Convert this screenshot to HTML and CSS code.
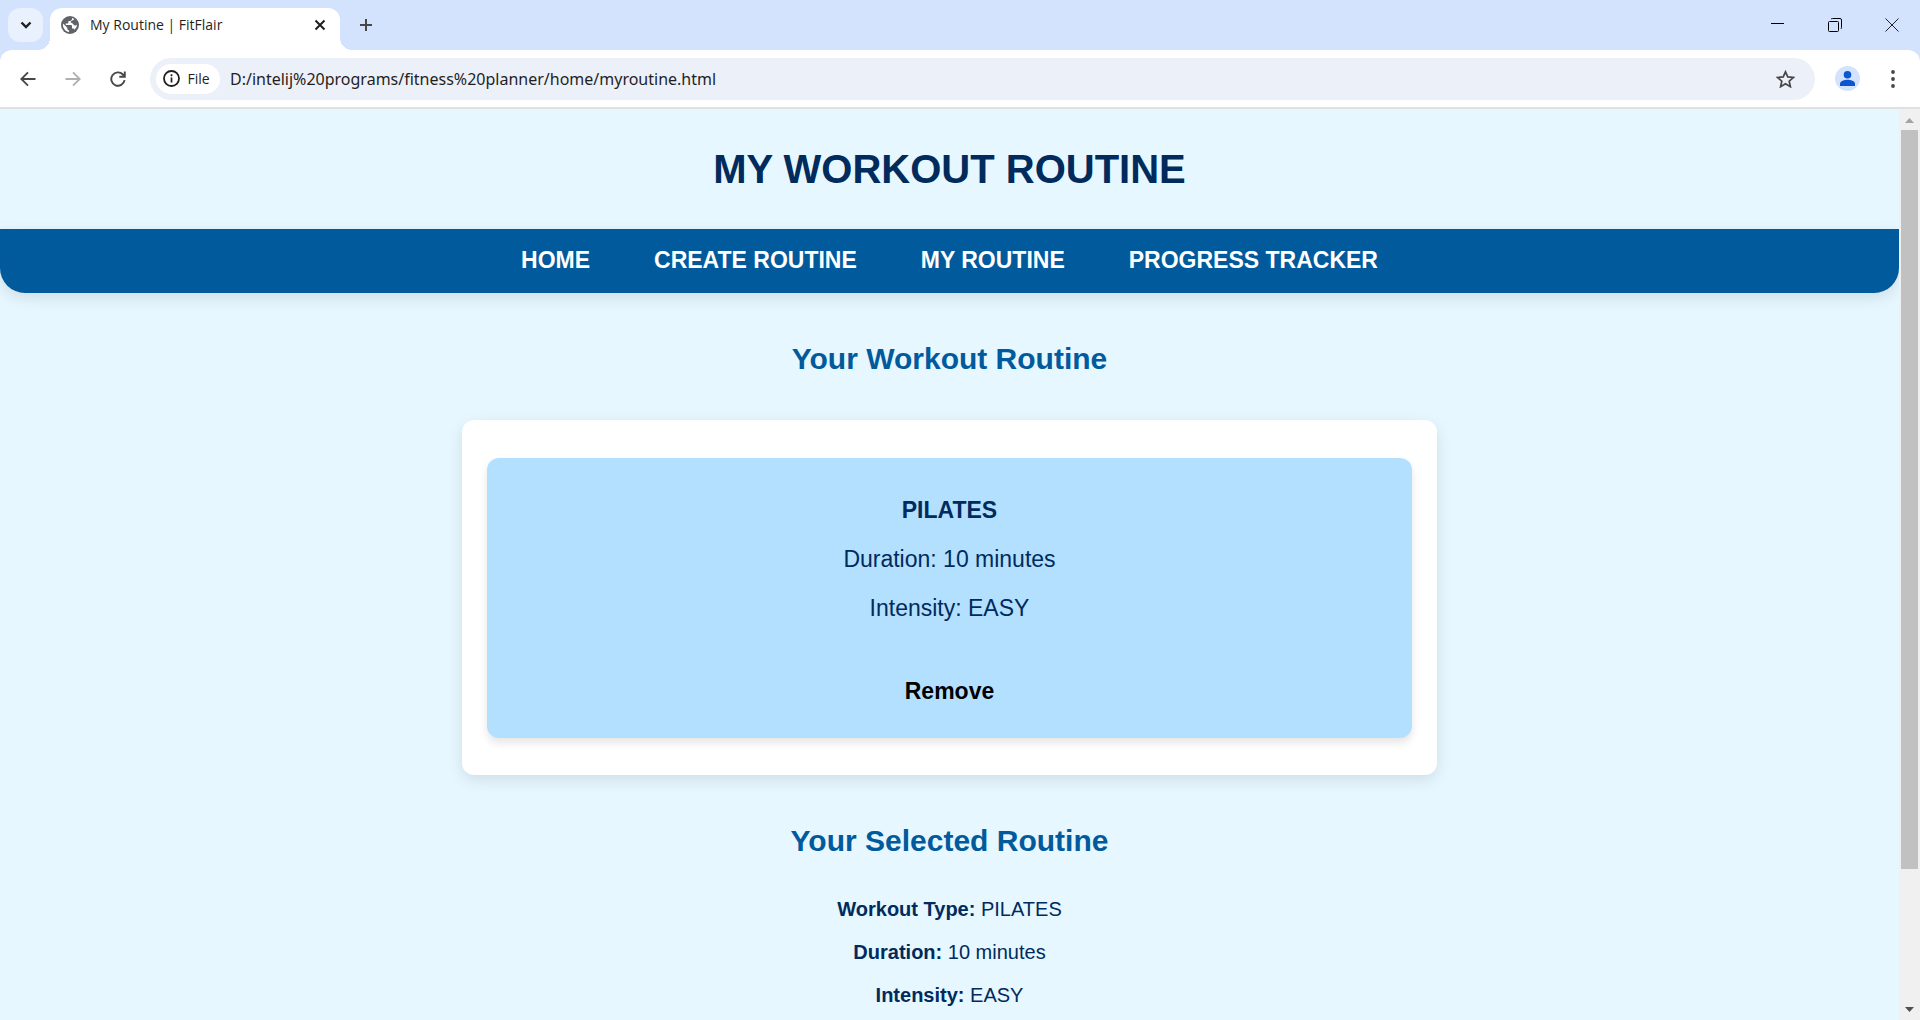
FILE: index.html
```html
<!DOCTYPE html>
<html lang="en">
<head>
<meta charset="utf-8">
<title>My Routine | FitFlair</title>
<link rel="stylesheet" href="styles.css">
</head>
<body>
<div class="browser">
  <div class="tab-strip">
    <button class="tab-search" aria-label="Search tabs">
      <svg width="12" height="8" viewBox="0 0 12 8"><path d="M1.5 1.5 6 6l4.500-4.500" fill="none" stroke="#1f1f1f" stroke-width="2.400"/></svg>
    </button>
    <div class="tab">
      <svg class="tab-icon" width="18" height="18" viewBox="0 0 18 18"><circle cx="9" cy="9" r="9" fill="#5f6368"/><path d="M11 2.100v1c0 1-.8 1.800-1.800 1.800H7.400v1.800c0 .5-.4.900-.9.900H4.700v1.500h5.400c.5 0 .9.400.9.900V12.600h.9c.8 0 1.500.5 1.700 1.200A7.200 7.200 0 0 0 16.100 8.500C15.500 9.200 14.600 9.600 13.600 9.400 12 9 12.300 7.300 10.900 7.100 9.600 7 9.200 5.900 10.200 5.300L13.400 3.300C12.700 2.800 11.900 2.400 11 2.100zM2 7.500C1.300 11.500 4 15.600 8.100 16.100V14.400c-1 0-1.800-.8-1.800-1.800V11.700z" fill="#fff"/></svg>
      <span class="tab-title">My Routine | FitFlair</span>
      <button class="tab-close" aria-label="Close tab">
        <svg width="12" height="12" viewBox="0 0 12 12"><path d="M1.500 1.500l9 9M10.500 1.500l-9 9" stroke="#1f1f1f" stroke-width="2"/></svg>
      </button>
    </div>
    <button class="new-tab" aria-label="New tab">
      <svg width="14" height="14" viewBox="0 0 14 14"><path d="M7 1v12M1 7h12" stroke="#474747" stroke-width="2"/></svg>
    </button>
    <div class="window-controls">
      <button aria-label="Minimize"><svg width="13" height="13" viewBox="0 0 13 13"><path d="M0 5.500h13" stroke="#000"/></svg></button>
      <button aria-label="Restore"><svg width="14" height="14" viewBox="0 0 14 14"><path d="M1.500 3.500h8a1 1 0 0 1 1 1v8a1 1 0 0 1-1 1h-8a1 1 0 0 1-1-1v-8a1 1 0 0 1 1-1zM3 1.200C3.300.7 4 .5 4.500.5H12A1.500 1.500 0 0 1 13.500 2v7.500c0 .5-.2 1.200-.7 1.500" fill="none" stroke="#000"/></svg></button>
      <button aria-label="Close window"><svg width="14" height="14" viewBox="0 0 14 14"><path d="M.5.5l13 13M13.500.5l-13 13" stroke="#222"/></svg></button>
    </div>
  </div>

  <div class="toolbar">
    <button class="tool" aria-label="Back"><svg width="16" height="16" viewBox="0 0 16 16"><path d="M15.500 8H2M8 1.300 1.300 8 8 14.700" fill="none" stroke="#474747" stroke-width="1.900"/></svg></button>
    <button class="tool" aria-label="Forward" disabled><svg width="16" height="16" viewBox="0 0 16 16"><path d="M.5 8H14M8 1.300 14.700 8 8 14.700" fill="none" stroke="#b0b0b0" stroke-width="1.900"/></svg></button>
    <button class="tool" aria-label="Reload"><svg width="16" height="16" viewBox="0 0 16 16"><path d="M14.600 9.200A6.700 6.700 0 1 1 12.900 3.500L14.500 5.200M14.800.5V5.700H9.300" fill="none" stroke="#474747" stroke-width="1.900"/></svg></button>
    <div class="address">
      <button class="file-chip">
        <svg width="17" height="17" viewBox="0 0 17 17"><circle cx="8.500" cy="8.500" r="7.500" fill="none" stroke="#1f1f1f" stroke-width="1.800"/><path d="M8.500 7.500v5M8.500 4.300v1.900" stroke="#1f1f1f" stroke-width="1.700"/></svg>
        File
      </button>
      <input class="url" type="text" aria-label="Address" value="D:/intelij%20programs/fitness%20planner/home/myroutine.html">
      <button class="star" aria-label="Bookmark this page"><svg width="19" height="18" viewBox="0 0 19 18"><path d="M9.500 1.800l2.300 5.100 5.600.6-4.200 3.700 1.200 5.500-4.900-2.900-4.900 2.900 1.200-5.500L1.600 7.500l5.600-.6z" fill="none" stroke="#474747" stroke-width="1.700"/></svg></button>
    </div>
    <button class="tool" aria-label="Profile"><svg width="25" height="25" viewBox="0 0 25 25"><circle cx="12.500" cy="12.500" r="12.500" fill="#d3e3fd"/><circle cx="12.500" cy="8.800" r="3.800" fill="#0b57d0"/><path d="M5 20v-2.200c0-2.800 4.500-4 7.500-4s7.500 1.200 7.500 4V20z" fill="#0b57d0"/></svg></button>
    <button class="tool" aria-label="Menu"><svg width="4" height="18" viewBox="0 0 4 18"><g fill="#474747"><circle cx="2" cy="2" r="1.900"/><circle cx="2" cy="9" r="1.900"/><circle cx="2" cy="16" r="1.900"/></g></svg></button>
  </div>

  <div class="viewport">
    <div class="page">
      <h1>MY WORKOUT ROUTINE</h1>
      <nav class="menu">
        <a href="#">HOME</a>
        <a href="#">CREATE ROUTINE</a>
        <a href="#">MY ROUTINE</a>
        <a href="#">PROGRESS TRACKER</a>
      </nav>
      <main>
        <h2>Your Workout Routine</h2>
        <section class="routine-list">
          <article class="routine">
            <h3>PILATES</h3>
            <p>Duration: 10 minutes</p>
            <p>Intensity: EASY</p>
            <button class="remove">Remove</button>
          </article>
        </section>
        <h2>Your Selected Routine</h2>
        <section class="selected">
          <p><strong>Workout Type:</strong> PILATES</p>
          <p><strong>Duration:</strong> 10 minutes</p>
          <p><strong>Intensity:</strong> EASY</p>
        </section>
      </main>
    </div>
    <div class="scrollbar">
      <svg width="21" height="21" viewBox="0 0 21 21"><path d="M6 14l4.500-5 4.500 5z" fill="#a3a3a3"/></svg>
      <div class="scroll-track"><div class="scroll-thumb"></div></div>
      <svg width="21" height="21" viewBox="0 0 21 21"><path d="M6 8l4.500 5 4.500-5z" fill="#505050"/></svg>
    </div>
  </div>
</div>
</body>
</html>
```

FILE: styles.css
```css
* {
  box-sizing: border-box;
}

body {
  margin: 0;
}

button {
  display: flex;
  align-items: center;
  justify-content: center;
  padding: 0;
  border: 0;
  background: none;
  font: inherit;
  color: inherit;
}

svg {
  display: block;
  flex: none;
}

.browser {
  display: flex;
  flex-direction: column;
  height: 100vh;
  overflow: hidden;
  background: #d3e3fd;
  font-family: "Open Sans", "Noto Sans", sans-serif;
  color: #1f1f1f;
}

/* Tab strip */

.tab-strip {
  display: flex;
  height: 50px;
  padding-left: 8px;
}

.tab-search {
  width: 35px;
  height: 34px;
  margin: 8px 7px 0 0;
  border-radius: 12px;
  background: #e9f0fe;
}

.tab {
  position: relative;
  display: flex;
  align-items: center;
  width: 290px;
  height: 42px;
  margin-top: 8px;
  padding: 0 14px 8px 11px;
  border-radius: 12px 12px 0 0;
  background: #fff;
}

.tab::before,
.tab::after {
  content: "";
  position: absolute;
  bottom: 0;
  width: 12px;
  height: 12px;
}

.tab::before {
  right: 100%;
  background: radial-gradient(circle at 0 0, transparent 12px, #fff 12px);
}

.tab::after {
  left: 100%;
  background: radial-gradient(circle at 100% 0, transparent 12px, #fff 12px);
}

.tab-title {
  flex: 1;
  margin-left: 11px;
  font-size: 14px;
  line-height: 20px;
}

.new-tab {
  width: 34px;
  height: 34px;
  margin: 8px 0 0 9px;
}

.window-controls {
  display: flex;
  margin-left: auto;
}

.window-controls button {
  width: 57px;
  height: 49px;
}

/* Toolbar */

.toolbar {
  display: flex;
  align-items: center;
  height: 59px;
  padding: 0 5px;
  border-bottom: 2px solid #e0e0e0;
  border-radius: 12px 12px 0 0;
  background: #fff;
}

.tool {
  width: 45px;
  height: 42px;
}

.address {
  display: flex;
  flex: 1;
  align-items: center;
  height: 42px;
  margin: 0 10px;
  padding: 0 6px;
  border-radius: 21px;
  background: #ecf0f9;
}

.file-chip {
  gap: 7px;
  width: 64px;
  height: 30px;
  padding-right: 3px;
  border-radius: 15px;
  background: #fff;
  font-size: 14px;
  font-weight: 500;
}

.url {
  flex: 1;
  height: 30px;
  margin-left: 10px;
  padding: 0;
  border: 0;
  outline: 0;
  background: none;
  font: 16px "Noto Sans", "Open Sans", sans-serif;
  color: #1f1f1f;
}

.star {
  width: 48px;
  height: 30px;
}

/* Page */

.viewport {
  display: flex;
  flex: 1;
  min-height: 0;
}

.page {
  flex: 1;
  overflow: hidden;
  background: #e6f7ff;
  font-family: Arial, "Liberation Sans", sans-serif;
  font-size: 20px;
  line-height: 23px;
  color: #002b5c;
  text-align: center;
}

h1 {
  margin: 37px 0;
  font-size: 40px;
  line-height: 46px;
}

.menu {
  display: flex;
  justify-content: center;
  gap: 64px;
  padding: 18px 0 20px;
  border-radius: 0 0 25px 25px;
  background: #005a9c;
  box-shadow: 0 5px 15px rgba(0, 0, 0, 0.1);
}

.menu a {
  font-size: 23px;
  font-weight: bold;
  line-height: 26px;
  color: #fff;
  text-decoration: none;
}

h2 {
  margin: 48px 0 40px;
  font-size: 30px;
  line-height: 35px;
  color: #005a9c;
}

.routine-list {
  max-width: 975px;
  margin: 44px auto 0;
  padding: 38px 25px 37px;
  border-radius: 12px;
  background: #fff;
  box-shadow: 0 5px 15px rgba(0, 0, 0, 0.1);
}

.routine {
  display: flex;
  flex-direction: column;
  align-items: center;
  gap: 22px;
  padding: 39px 25px 33px;
  border-radius: 12px;
  background: #b3e0ff;
  box-shadow: 0 5px 8px rgba(0, 0, 0, 0.1);
  font-size: 23px;
  line-height: 27px;
}

.routine h3,
.routine p {
  margin: 0;
  font-size: 23px;
}

.remove {
  margin-top: 34px;
  font-weight: bold;
  color: #000;
}

.selected p {
  margin: 20px 0;
}

/* Scrollbar */

.scrollbar {
  display: flex;
  flex-direction: column;
  width: 21px;
  background: #f0f0f0;
}

.scroll-track {
  flex: 1;
  padding: 0 2px;
}

.scroll-thumb {
  height: 85%;
  background: #c1c1c1;
}
```
